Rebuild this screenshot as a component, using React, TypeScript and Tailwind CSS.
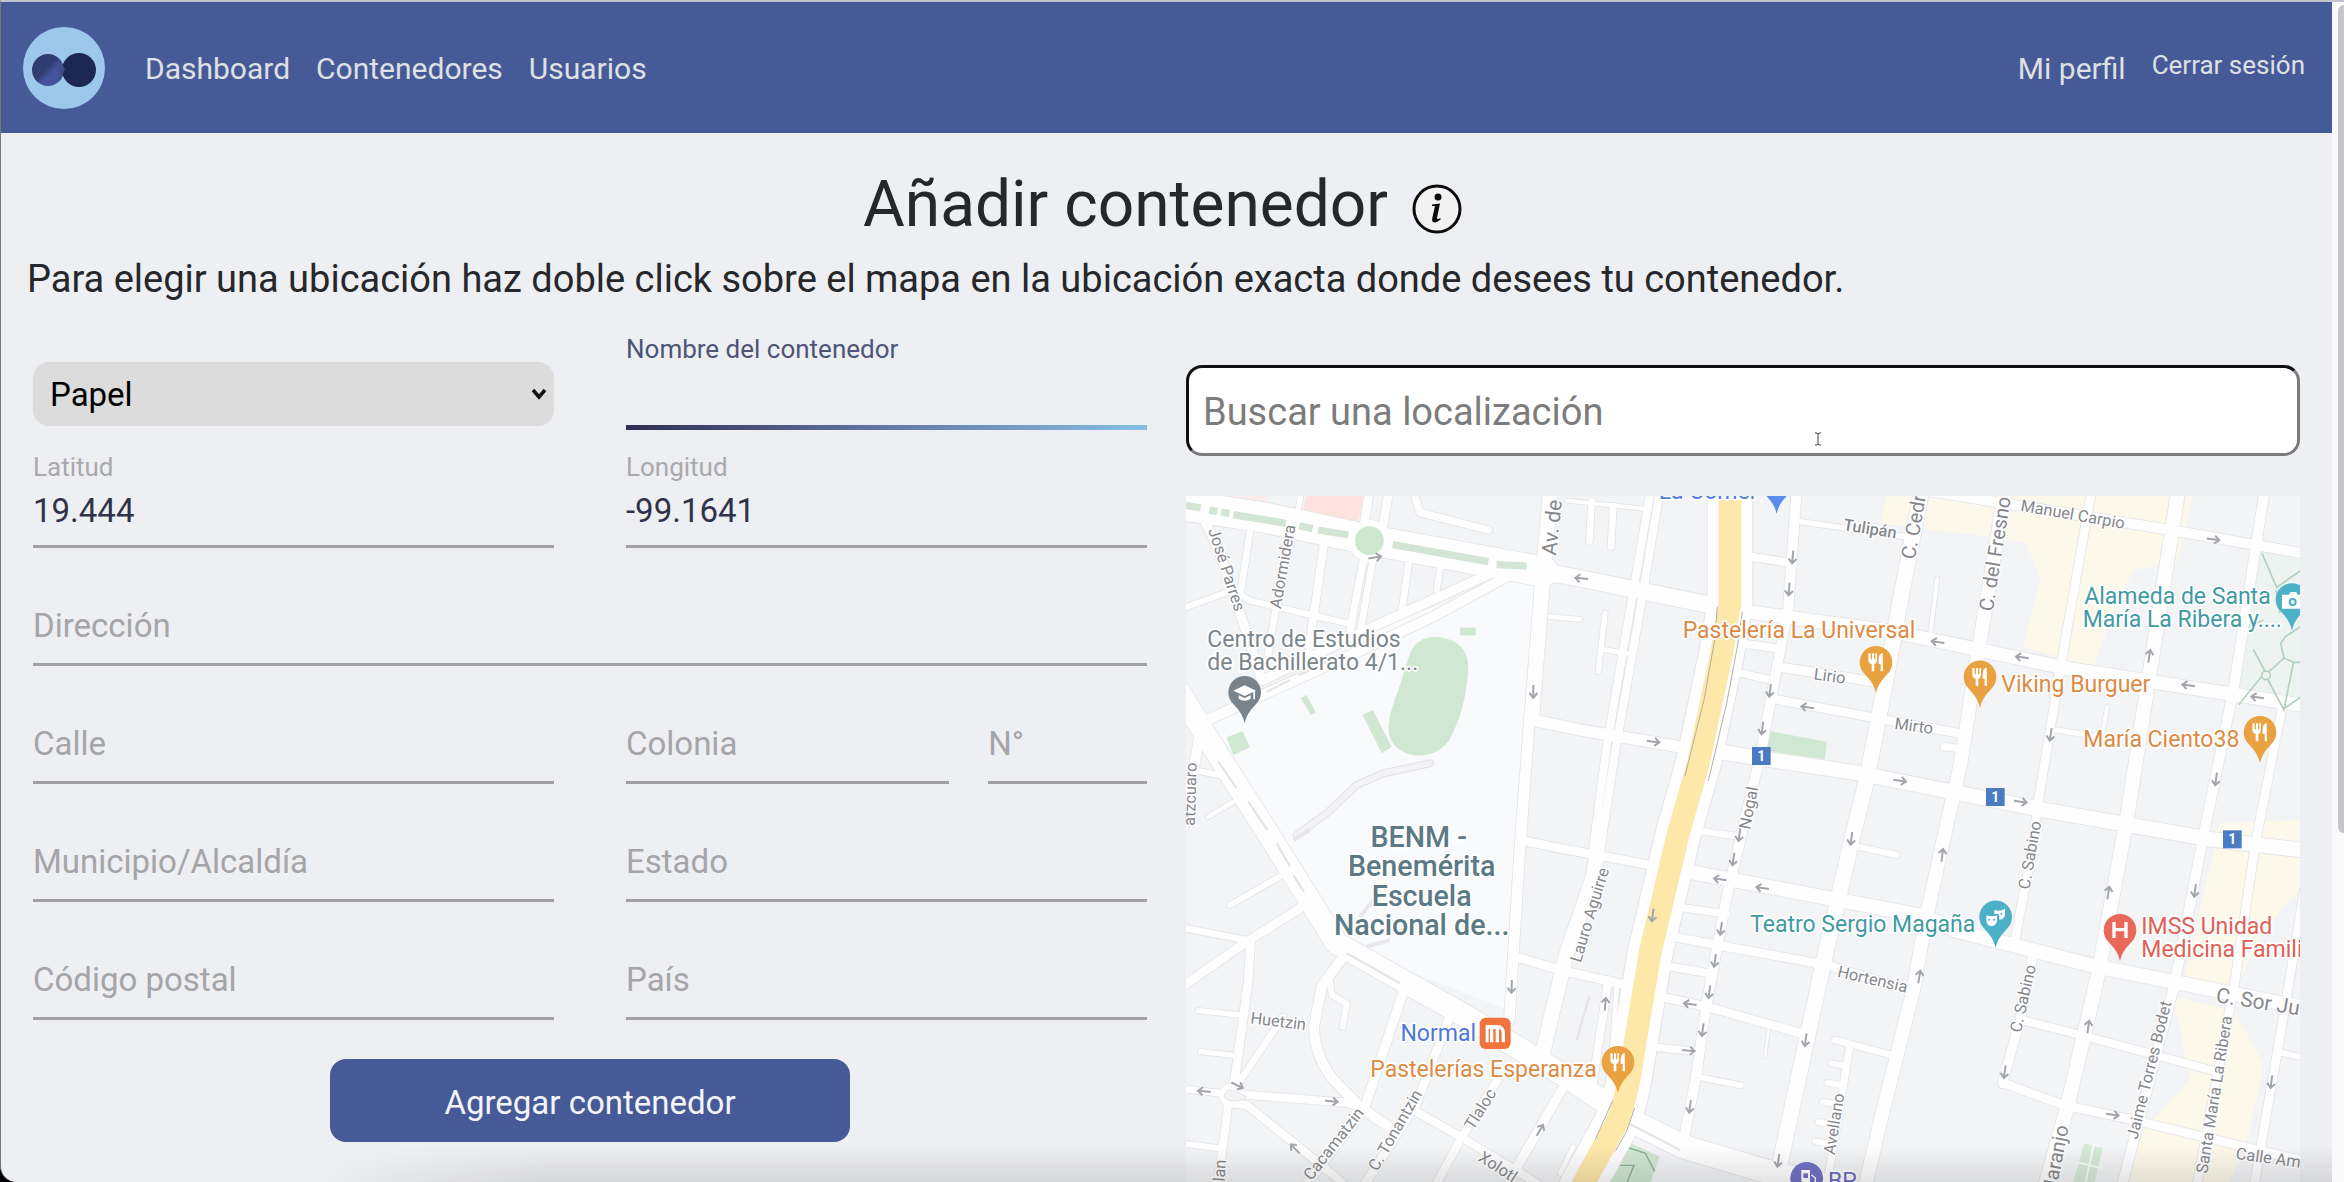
import React from 'react';

type Road = [number, string];

const ROADS: Road[] = [
  [90, 'M0 75L250 112L570 180L1090 275'],
  [50, 'M1090 275L1200 295L1640 385'],
  [40, 'M1700 395L2140 455L2340 497L2660 565L3380 678'],
  [26, 'M568 30L552 140'],
  [26, 'M628 30L606 150'],
  [22, 'M700 30L720 98L925 150'],
  [44, 'M1112 30L1090 270L1055 720'],
  [32, 'M1050 700L1020 1100L988 1620'],
  [28, 'M960 268L580 440L250 600'],
  [30, 'M1060 275L980 290L760 410L480 540L60 730'],
  [28, 'M60 90L120 220L180 400L245 600'],
  [20, 'M212 140L180 350'],
  [18, 'M0 388L160 330L210 362L510 432'],
  [20, 'M345 130L285 400L265 520'],
  [24, 'M435 170L382 540'],
  [16, 'M364 30L350 120'],
  [22, 'M552 230L510 450'],
  [20, 'M580 230L542 450'],
  [20, 'M690 220L665 400'],
  [18, 'M785 240L770 330'],
  [66, 'M0 640L80 770L270 1070L470 1390L860 1610L1190 1810L1360 1925'],
  [30, 'M60 760L10 1040'],
  [18, 'M50 872L140 890'],
  [14, 'M85 1010L170 960'],
  [34, 'M1050 718L1200 750L1440 790L1560 812'],
  [24, 'M1440 30L1375 420L1308 800L1262 1100'],
  [24, 'M1412 30L1345 420L1280 800L1240 1100'],
  [44, 'M1256 1080L1240 1190L1160 1420L1085 1730'],
  [26, 'M1020 1080L1140 1105L1410 1155'],
  [26, 'M1000 1428L1140 1470L1350 1518'],
  [24, 'M1285 1500L1235 1830'],
  [14, 'M1310 1520L1290 1800'],
  [12, 'M1160 62L1410 88'],
  [20, 'M1235 64L1228 185'],
  [20, 'M1300 78L1293 200'],
  [16, 'M1275 400L1255 575'],
  [14, 'M1268 508L1340 520'],
  [14, 'M1110 410L1200 418'],
  [30, 'M1850 30L1825 380L1780 620L1740 830L1685 1060L1640 1250L1580 1570L1548 1790L1505 2010'],
  [24, 'M1700 228L1840 250'],
  [24, 'M1650 485L1790 505'],
  [22, 'M1650 572L1780 602'],
  [28, 'M1790 560L2100 608'],
  [26, 'M1770 655L2090 715L2350 762'],
  [44, 'M1600 812L1740 835L2040 880L2340 940L2592 990L3092 1078L3380 1112'],
  [46, 'M2225 30L2165 340L2110 640L2060 900L2020 1060L1930 1450L1880 1680L1785 2120'],
  [12, 'M2272 295L2250 470'],
  [16, 'M1860 125L2175 170'],
  [40, 'M2475 30L2392 530L2342 850L2290 1080L2235 1330L2200 1530L2100 1930L2055 2120'],
  [30, 'M2250 34L2972 150L3380 222'],
  [26, 'M2735 30L2642 560L2572 980L2560 1090L2507 1370'],
  [28, 'M2562 1410L2520 1620L2467 1810'],
  [42, 'M2995 30L2912 560L2840 1020L2755 1480L2662 1880L2595 2120'],
  [30, 'M3254 30L3162 620L3072 1060L2982 1520L2825 2120'],
  [26, 'M3307 680L3228 1080L3162 1520L3050 2120'],
  [26, 'M3375 1220L3312 1600L3272 1830L3222 2120'],
  [42, 'M1540 1178L1950 1255L2240 1310L2320 1350L2752 1460L3380 1585'],
  [20, 'M1540 1050L1680 1070'],
  [22, 'M1500 1282L1640 1302'],
  [26, 'M1490 1372L1610 1395L1940 1455L2200 1535'],
  [24, 'M1470 1460L1600 1482'],
  [26, 'M1450 1552L1580 1580L1880 1665'],
  [22, 'M1410 1700L1560 1716'],
  [18, 'M1550 1790L1682 1816'],
  [18, 'M2010 1095L2150 1125'],
  [20, 'M1965 1680L2160 1732'],
  [22, 'M2010 1695L1940 2120'],
  [18, 'M1955 1750L2000 1758'],
  [18, 'M1942 1808L1990 1816'],
  [18, 'M1928 1866L1975 1874'],
  [18, 'M1915 1926L1965 1934'],
  [18, 'M1905 1984L1950 1992'],
  [8, 'M1765 1650L1755 1730'],
  [24, 'M2532 1622L2720 1670L3110 1775'],
  [26, 'M2467 1808L2650 1875L2850 1918L3380 2045'],
  [18, 'M3290 1715L3380 1735'],
  [22, 'M2292 800L2340 806'],
  [16, 'M2620 748L2780 775'],
  [12, 'M2782 680L2765 775'],
  [70, 'M1360 1925L1510 2000L1780 2080L2000 2130'],
  [18, 'M150 1275L320 1178'],
  [26, 'M0 1525L200 1385L380 1272'],
  [20, 'M0 1342L210 1382'],
  [26, 'M212 1382L205 1500L163 1810'],
  [16, 'M55 1592L180 1605'],
  [16, 'M62 1715L165 1726'],
  [20, 'M310 1610L172 1815'],
  [20, 'M0 1825L140 1842'],
  [24, 'M170 1842L500 1868L550 1885'],
  [24, 'M145 1870L122 2050L110 2120'],
  [18, 'M0 1990L128 2006'],
  [24, 'M140 1868L200 1875L430 2060L500 2120'],
  [30, 'M490 1430L425 1520L402 1640Q405 1740 470 1810L545 1885L640 1950'],
  [18, 'M450 1500L455 1545L500 1570L488 1640'],
  [28, 'M675 1520L555 1880L375 2120'],
  [26, 'M805 1620L710 1870L550 2120'],
  [24, 'M965 1780L840 1980L765 2120'],
  [24, 'M690 1885L850 1975L1070 2110'],
  [28, 'M1145 1830L1000 2080'],
  [14, 'M1140 2080L1180 2000'],
];

const HIGHWAY =
  'M1650 60L1650 370L1625 520L1555 850L1495 1060L1410 1420L1360 1720Q1340 1860 1310 1930L1205 2120';

const YELLOW_AREAS = [
  'M2120 48H2340V160L2100 130Z',
  'M2292 60L2400 48H3040L2990 250L2860 270L2800 400L2740 560L2530 500L2580 300L2540 190L2292 150Z',
  'M3120 1030L3360 1020V1230L3250 1350L3165 1530L3010 1510Z',
  'M2980 1550L3160 1590L3250 1750L3210 1950L3150 2106H2840L2890 1950L3030 1800Z',
];

const GREENS = [
  'M690 520Q710 470 770 470Q865 480 865 565Q858 690 808 780Q770 832 700 826Q628 810 625 745Q630 690 655 630Z',
  'M840 443H887V466H840Z',
  'M548 706L578 690L635 800L605 820Z',
  'M362 653L380 645L408 698L392 706Z',
  'M140 772L188 754L210 802L160 825Z',
  'M1750 750L1940 785L1935 838L1745 810Z',
  'M1350 1988L1440 2030L1410 2110H1290Z',
];

const MEDIANS = 'M18 76L62 84M88 90L112 95M124 96L148 100M160 104L318 130M358 138L398 146M414 150L505 165M638 194L925 245M950 254L1040 258';

const ARROWS: [number, number, number][] = [
  [585, 232, -10], [1060, 635, 90], [1204, 295, 185], [1420, 785, 8],
  [1838, 232, 95], [1827, 328, 95], [1770, 632, 98], [1747, 745, 98], [1882, 682, 188], [2160, 902, 8],
  [2273, 486, 188], [2526, 532, 188], [3100, 178, 8], [2908, 528, -82], [3025, 616, 188], [3232, 652, 188],
  [2612, 764, 98], [3108, 898, 98], [2522, 965, 8], [1678, 1065, 98], [1660, 1138, 98], [1620, 1198, 188],
  [1747, 1224, 188], [2014, 1076, 98], [2287, 1125, -82], [1418, 1306, 98], [1623, 1346, 98], [1605, 1442, 98],
  [1588, 1536, 98], [1530, 1572, 188], [1568, 1650, 98], [1276, 1572, -85], [1526, 1712, 5], [1530, 1880, 98],
  [1877, 1680, 98], [1795, 2042, 98], [2218, 1490, -80], [995, 1520, 92], [72, 1834, 185], [172, 1816, 25],
  [455, 1864, 5], [345, 2006, -135], [1080, 1950, -60], [2785, 1238, -82], [3045, 1232, 98], [2725, 1640, -82],
  [2474, 1776, 98], [2798, 1904, 8], [3274, 1806, 98],
];

type Street = { t: string; x: number; y: number; r: number; s?: number; w?: number; a?: 'start' | 'end' };

const STREETS: Street[] = [
  { t: 'José Parres', x: 84, y: 150, r: 72 },
  { t: 'Adormidera', x: 302, y: 388, r: -80 },
  { t: 'atzcuaro', x: 44, y: 1038, r: -88 },
  { t: 'Av. de', x: 1128, y: 228, r: -84, s: 63 },
  { t: 'Tulipán', x: 1988, y: 150, r: 9, w: 500 },
  { t: 'C. Cedro', x: 2204, y: 240, r: -80, s: 60 },
  { t: 'C. del Fresno', x: 2438, y: 396, r: -81, s: 60 },
  { t: 'Manuel Carpio', x: 2520, y: 92, r: 10 },
  { t: 'Lirio', x: 1900, y: 598, r: 8 },
  { t: 'Mirto', x: 2142, y: 746, r: 8 },
  { t: 'Nogal', x: 1710, y: 1050, r: -79 },
  { t: 'Lauro Aguirre', x: 1202, y: 1450, r: -73 },
  { t: 'Huetzin', x: 210, y: 1630, r: 7 },
  { t: 'Cacamatzin', x: 394, y: 2104, r: -52 },
  { t: 'C. Tonantzin', x: 592, y: 2076, r: -60 },
  { t: 'Tlaloc', x: 880, y: 1952, r: -58 },
  { t: 'Xolotl', x: 892, y: 2040, r: 33 },
  { t: 'Hortensia', x: 1970, y: 1490, r: 13 },
  { t: 'Avellano', x: 1964, y: 2026, r: -81 },
  { t: 'C. Sabino', x: 2548, y: 1230, r: -80 },
  { t: 'C. Sabino', x: 2522, y: 1660, r: -77 },
  { t: 'C. Sor Ju', x: 3106, y: 1566, r: 9, s: 63 },
  { t: 'Jaime Torres Bodet', x: 2872, y: 1980, r: -76 },
  { t: 'Santa María La Ribera', x: 3082, y: 2082, r: -81 },
  { t: 'C. Naranjo', x: 2666, y: 1940, r: -79, s: 60, a: 'end' },
  { t: 'Calle Am', x: 3166, y: 2036, r: 8 },
  { t: 'Tenochtitlan', x: 138, y: 2040, r: -86, a: 'end' },
];

type Poi = { lines: string[]; x: number; y: number; fill: string; a?: 'start' | 'middle' | 'end' };

const POIS: Poi[] = [
  { lines: ['Centro de Estudios', 'de Bachillerato 4/1...'], x: 82, y: 500, fill: '#7b858c' },
  { lines: ['Pastelería La Universal'], x: 1508, y: 473, fill: '#dd8a45' },
  { lines: ['Viking Burguer'], x: 2464, y: 636, fill: '#dd8a45' },
  { lines: ['María Ciento38'], x: 3178, y: 802, fill: '#dd8a45', a: 'end' },
  { lines: ['Alameda de Santa'], x: 3272, y: 372, fill: '#3f9ba3', a: 'end' },
  { lines: ['María La Ribera y....'], x: 2708, y: 440, fill: '#3f9ba3' },
  { lines: ['Teatro Sergio Magaña'], x: 2386, y: 1356, fill: '#3f9ba3', a: 'end' },
  { lines: ['IMSS Unidad', 'Medicina Famili'], x: 2884, y: 1362, fill: '#e06055' },
  { lines: ['Normal'], x: 888, y: 1684, fill: '#4d78d8', a: 'end' },
  { lines: ['Pastelerías Esperanza'], x: 1250, y: 1792, fill: '#dd8a45', a: 'end' },
  { lines: ['La Comer'], x: 1436, y: 58, fill: '#4d7ee0' },
  { lines: ['BP'], x: 1944, y: 2126, fill: '#6b6cc0' },
];

function Pin({ x, y, color, children }: { x: number; y: number; color: string; children?: React.ReactNode }) {
  return (
    <g transform={`translate(${x} ${y})`}>
      <path d="M0 94C-6 66-18 54-34 36A49 49 0 1 1 34 36C18 54 6 66 0 94Z" fill={color} />
      <g fill="#fff">{children}</g>
    </g>
  );
}

const Cutlery = () => (
  <g>
    <path
      d="M-22-26V-6Q-22 4-12 6V28H-4V6Q4 4 4-6V-26H-1V-8H-5V-26H-11V-8H-15V-26Z"
      transform="translate(-1 0)"
    />
    <path d="M20-28Q8-24 8-8V6H14V28H21Z" />
  </g>
);

const Shield = ({ x, y }: { x: number; y: number }) => (
  <g>
    <rect x={x - 28} y={y - 27} width="56" height="54" fill="#4a7cc4" />
    <text x={x} y={y + 15} textAnchor="middle" fontSize="42" fontWeight="700" fill="#fff">1</text>
  </g>
);

function CityMap() {
  return (
    <svg
      viewBox="18 48 3342 2058"
      preserveAspectRatio="xMinYMin slice"
      className="h-full w-full font-['Roboto',sans-serif]"
      role="img"
      aria-label="Mapa"
    >
      <rect x="0" y="0" width="3400" height="2200" fill="#f3f4f6" />
      <path d="M600 440L1000 290H1080L1010 1600L470 1390L70 740Z" fill="#f9fafc" />
      <path d="M378 48H552L535 126L368 96Z" fill="#fde2dd" />
      <path d="M90 48H262L258 84L90 56Z" fill="#fbeceb" />
      {YELLOW_AREAS.map((d) => <path key={d} d={d} fill="#fdf9ea" />)}
      <path d="M3240 215L3360 235V662L3172 628Z" fill="#edf3f0" />
      {GREENS.map((d) => <path key={d} d={d} fill="#d0e7d1" />)}
      <path d="M350 1065L440 1000L530 915L610 880L750 850" fill="none" stroke="#e2e2e6" strokeWidth="24" strokeLinecap="round" />
      <path d="M350 1065L440 1000L530 915L610 880L750 850" fill="none" stroke="#f3f2f5" strokeWidth="18" strokeLinecap="round" />
      <path d="M340 1080L390 1050M540 1310L580 1260M560 1400L630 1380" stroke="#e8e8ec" strokeWidth="12" />
      <g fill="none" strokeLinecap="round" strokeLinejoin="round" stroke="#e3e4e8">
        {ROADS.map(([w, d]) => <path key={d} d={d} strokeWidth={w + 5} />)}
        <path d={HIGHWAY} strokeWidth="140" />
        <circle cx="568" cy="182" r="64" />
        <circle cx="150" cy="1845" r="34" />
      </g>
      <g fill="none" strokeLinecap="round" strokeLinejoin="round" stroke="#fefefe">
        {ROADS.map(([w, d]) => <path key={d} d={d} strokeWidth={w} />)}
        <path d={HIGHWAY} strokeWidth="134" />
      </g>
      <circle cx="568" cy="182" r="62" fill="#fefefe" />
      <circle cx="568" cy="182" r="43" fill="#cfe6cf" />
      <circle cx="150" cy="1845" r="32" fill="#fefefe" />
      <path d="M132 1846Q138 1826 160 1832L200 1850Q180 1866 152 1862Q134 1860 132 1846Z" fill="#f3f4f6" stroke="#e3e4e8" strokeWidth="3" />
      <path d={MEDIANS} stroke="#d3e6d6" strokeWidth="22" fill="none" />
      <path
        d="M260 636L330 600M355 586L440 546M115 845L170 925M205 965L262 1050M290 1090L330 1160M340 1185L372 1235M1228 1550L1190 1680M1345 1930L1500 2010M500 1420L660 1510"
        stroke="#e8e4e6"
        strokeWidth="7"
        fill="none"
      />
      <path d={HIGHWAY} stroke="#fde7a9" strokeWidth="68" fill="none" />
      <path
        d="M1612 380L1604 480L1572 660L1515 888M1687 395L1672 500L1640 670L1585 903M1298 1862L1246 1978M1364 1884L1340 1954L1306 2014"
        stroke="#b3b0a4"
        strokeWidth="3"
        fill="none"
      />
      <path d="M1348 2004L1396 2020L1424 2074M1320 2056H1362L1340 2110" stroke="#8fae98" strokeWidth="4" fill="none" />
      <path
        d="M3246 220L3290 322L3362 272M3288 330L3300 400M3220 508L3256 576L3176 674M3268 574L3312 534L3302 490L3316 470L3362 440M3312 534L3345 548L3362 546M3340 548L3312 690L3264 600M3312 686L3362 652M3210 440L3250 420"
        stroke="#b1d2bf"
        strokeWidth="5"
        fill="none"
      />
      <circle cx="3258" cy="586" r="13" fill="#edf3f0" stroke="#b1d2bf" strokeWidth="5" />
      <path d="M2712 1990L2768 2005L2744 2106H2680Z" fill="#d6ead8" />
      <path d="M2742 1990L2716 2110M2690 2046L2770 2066" stroke="#f8faf9" strokeWidth="6" />
      <g fill="none" stroke="#a3a5ac" strokeWidth="6">
        {ARROWS.map(([x, y, r]) => (
          <path key={`${x}-${y}`} d="M-20 0H16M4-12L18 0L4 12" transform={`translate(${x} ${y}) rotate(${r})`} />
        ))}
      </g>
      <g fill="#85878b" stroke="#fff" strokeWidth="8" paintOrder="stroke" strokeLinejoin="round">
        {STREETS.map((s) => (
          <text
            key={`${s.t}-${s.y}`}
            fontSize={s.s ?? 49}
            fontWeight={s.w ?? 400}
            textAnchor={s.a ?? 'start'}
            transform={`translate(${s.x} ${s.y}) rotate(${s.r})`}
          >
            {s.t}
          </text>
        ))}
      </g>
      <g stroke="#fff" strokeWidth="10" paintOrder="stroke" strokeLinejoin="round" fontSize="69">
        {POIS.map((p) => (
          <text key={p.lines[0]} fill={p.fill} textAnchor={p.a ?? 'start'}>
            {p.lines.map((l, i) => <tspan key={l} x={p.x} y={p.y + i * 69}>{l}</tspan>)}
          </text>
        ))}
        <text fill="#5b7a85" fontSize="86" fontWeight="500" textAnchor="middle">
          <tspan x="716" y="1101">BENM -</tspan>
          <tspan x="725" y="1189">Benemérita</tspan>
          <tspan x="725" y="1277">Escuela</tspan>
          <tspan x="725" y="1366">Nacional de...</tspan>
        </text>
      </g>
      <Shield x={1744} y={828} />
      <Shield x={2446} y={951} />
      <Shield x={3157} y={1078} />
      <Pin x={194} y={636} color="#78838b">
        <path d="M-34-4L0-20L34-4L0 12Z" />
        <path d="M-18 10L0 18L18 10V20Q0 32-18 20Z" />
        <path d="M26-2H31V22H26Z" />
      </Pin>
      <Pin x={2088} y={546} color="#eaa13f"><Cutlery /></Pin>
      <Pin x={2400} y={590} color="#eaa13f"><Cutlery /></Pin>
      <Pin x={3240} y={756} color="#eaa13f"><Cutlery /></Pin>
      <Pin x={1314} y={1746} color="#eaa13f"><Cutlery /></Pin>
      <Pin x={3336} y={358} color="#4cb0c6">
        <path d="M-30-14H-10L-4-22H12L18-14H30V28H-30Z" />
        <circle cx="2" cy="8" r="12" fill="#4cb0c6" />
        <circle cx="2" cy="8" r="6" />
      </Pin>
      <Pin x={2447} y={1310} color="#4cb0c6">
        <path d="M-4-20Q12-14 28-24V-4Q22 12 10 8V-8H-4Z" />
        <path d="M-28-4Q-12 2 4-4V12Q0 28-12 28Q-26 28-28 12Z" />
        <circle cx="-19" cy="9" r="3" fill="#4cb0c6" />
        <circle cx="-5" cy="9" r="3" fill="#4cb0c6" />
        <circle cx="17" cy="-9" r="3" fill="#4cb0c6" />
      </Pin>
      <Pin x={2820} y={1350} color="#e8685a">
        <path d="M-23-24H-13V-6H13V-24H23V24H13V4H-13V24H-23Z" />
      </Pin>
      <Pin x={1880} y={2094} color="#7372c4">
        <path d="M-16-24H10V24H-16Z" />
        <path d="M14-10L26 0V22" fill="none" stroke="#fff" strokeWidth="4" />
        <rect x="-10" y="-14" width="14" height="14" fill="#7372c4" />
      </Pin>
      <Pin x={1790} y={8} color="#5b8def" />
      <g transform="translate(899 1613)">
        <rect width="93" height="94" rx="18" fill="#f0743e" />
        <path d="M18 22H52Q76 22 76 48V74H66V48Q66 36 58 34V74H48V34H41V74H31V34H27V74H18Z" fill="#fff" />
      </g>
    </svg>
  );
}

function Field({ id, label, value }: { id: string; label: string; value?: string }) {
  const filled = value !== undefined;
  return (
    <div className="relative flex h-[118px] flex-col justify-end">
      <label
        htmlFor={id}
        className={
          filled
            ? 'text-[26px] leading-8 text-[#a9a9ac]'
            : 'pointer-events-none absolute bottom-5 left-0 text-[33px] leading-10 text-[#a5a5a7]'
        }
      >
        {label}
      </label>
      <input
        id={id}
        defaultValue={value}
        className="h-[65px] w-full border-b-[3px] border-[#a1a1a5] bg-transparent pb-2 text-[33px] text-[#30324a] outline-none"
      />
    </div>
  );
}

export default function App() {
  return (
    <div className="bg-black">
      <div className="relative flex h-screen overflow-hidden rounded-bl-2xl border-t-2 border-l border-t-[#c2c5cd] border-l-[#77787c] bg-[#eeeff3] font-['Roboto',sans-serif]">
        <div className="flex min-w-0 flex-1 flex-col">
          <nav className="flex h-[131px] shrink-0 items-center bg-[#465a98] pr-[27px] pl-[22px] text-[30px] text-[#dfe0e4]">
            <a href="#inicio" aria-label="Inicio" className="mr-10">
              <svg viewBox="0 0 82 82" className="size-[82px]">
                <defs>
                  <linearGradient id="lens" x1="0" y1="0" x2="1" y2="1">
                    <stop offset="0.45" stopColor="#2f3c72" />
                    <stop offset="0.6" stopColor="#43539a" />
                  </linearGradient>
                </defs>
                <circle cx="41" cy="41" r="41" fill="#9dc8ec" />
                <circle cx="25" cy="43" r="16" fill="url(#lens)" />
                <circle cx="56" cy="43" r="17" fill="#1d2850" />
                <path d="M36 32L42 42L37 54Z" fill="#3f4c86" />
              </svg>
            </a>
            <div className="flex items-center gap-[26px] pt-0.5">
              <a href="#dashboard">Dashboard</a>
              <a href="#contenedores">Contenedores</a>
              <a href="#usuarios">Usuarios</a>
            </div>
            <div className="ml-auto flex items-center gap-[26px] pt-0.5">
              <a href="#perfil">Mi perfil</a>
              <button type="button" className="pb-1.5 text-[26px]">Cerrar sesión</button>
            </div>
          </nav>

          <main className="flex min-h-0 flex-1 flex-col">
            <header className="text-[#25272b]">
              <div className="flex items-center justify-center gap-6 pt-[30px] pr-2">
                <h1 className="text-[64px] leading-[84px]">Añadir contenedor</h1>
                <button type="button" aria-label="Información" className="mt-2">
                  <svg viewBox="0 0 50 50" className="size-[50px]">
                    <circle cx="25" cy="25" r="23" fill="#f2f2f2" stroke="#0c0c0c" strokeWidth="3" />
                    <circle cx="26" cy="13" r="3.5" fill="#0c0c0c" />
                    <path d="M20 20.500L28 19.500L25 34Q25 36 28.500 34L28.500 35.500Q24 39.500 21 38Q19.500 37 20.500 33L23 22L20 22Z" fill="#0c0c0c" />
                  </svg>
                </button>
              </div>
              <p className="pl-[26px] text-[38px] leading-[65px]">
                Para elegir una ubicación haz doble click sobre el mapa en la ubicación exacta donde desees tu contenedor.
              </p>
            </header>

            <div className="grid min-h-0 flex-1 grid-cols-2 gap-[39px] px-8">
              <form className="flex flex-col">
                <div className="grid grid-cols-2 gap-x-[72px]">
                  <div className="flex h-[118px] flex-col justify-end pb-1">
                    <div className="relative">
                      <select
                        aria-label="Tipo de contenedor"
                        className="h-16 w-full appearance-none rounded-2xl bg-[#dcdcdc] pt-0.5 pl-[17px] text-[33px] text-black"
                      >
                        <option>Papel</option>
                      </select>
                      <svg viewBox="0 0 16 12" className="pointer-events-none absolute top-1/2 right-[7px] h-3 w-4 -translate-y-1/2">
                        <path d="M2 2L8 9L14 2" fill="none" stroke="#111" strokeWidth="3.500" />
                      </svg>
                    </div>
                  </div>
                  <div className="flex h-[118px] flex-col pt-[21px]">
                    <label htmlFor="nombre" className="text-[26px] leading-8 text-[#4d5577]">
                      Nombre del contenedor
                    </label>
                    <input id="nombre" className="min-h-0 flex-1 bg-transparent text-[33px] text-[#30324a] outline-none" />
                    <div className="h-[5px] bg-linear-to-r from-[#2f2f52] via-[#6478a8] to-[#84c0e6]" />
                  </div>
                  <Field id="latitud" label="Latitud" value="19.444" />
                  <Field id="longitud" label="Longitud" value="-99.1641" />
                  <div className="col-span-2">
                    <Field id="direccion" label="Dirección" />
                  </div>
                  <Field id="calle" label="Calle" />
                  <div className="grid grid-cols-[324fr_159fr] gap-[39px]">
                    <Field id="colonia" label="Colonia" />
                    <Field id="numero" label="N°" />
                  </div>
                  <Field id="municipio" label="Municipio/Alcaldía" />
                  <Field id="estado" label="Estado" />
                  <Field id="cp" label="Código postal" />
                  <Field id="pais" label="País" />
                </div>
                <button type="submit" className="mx-auto mt-[39px] h-[83px] w-[520px] max-w-full shrink-0 rounded-2xl bg-[#465a98] pt-1 text-[33px] text-[#f4f5fa]">
                  Agregar contenedor
                </button>
              </form>

              <section className="flex min-h-0 flex-col gap-10 pt-[53px]">
                <div className="relative shrink-0">
                  <input
                    aria-label="Buscar una localización"
                    placeholder="Buscar una localización"
                    className="h-[91px] w-full rounded-2xl border-[3px] border-t-[#111] border-r-[#7b7b7b] border-b-[#7b7b7b] border-l-[#111] bg-white px-3.5 pt-0.5 text-[38px] outline-none placeholder:text-[#7c7c7c]"
                  />
                  <svg viewBox="0 0 8 14" className="pointer-events-none absolute top-[67px] left-[628px] h-3.5 w-2">
                    <path d="M1 1H3L4 2L5 1H7M4 2V12M1 13H3L4 12L5 13H7" fill="none" stroke="#444" />
                  </svg>
                </div>
                <div className="min-h-0 flex-1 overflow-hidden">
                  <CityMap />
                </div>
              </section>
            </div>
          </main>
        </div>

        <div className="w-3 shrink-0 bg-[#fafafb] pt-[3px] pl-1.5">
          <div className="h-[828px] rounded-l-md bg-[#c6c6c8]" />
        </div>
        <div className="pointer-events-none absolute right-3 bottom-0 left-[13%] h-9 bg-linear-to-t from-black/10 to-transparent [mask-image:linear-gradient(to_right,transparent,black_12%)]" />
      </div>
    </div>
  );
}
